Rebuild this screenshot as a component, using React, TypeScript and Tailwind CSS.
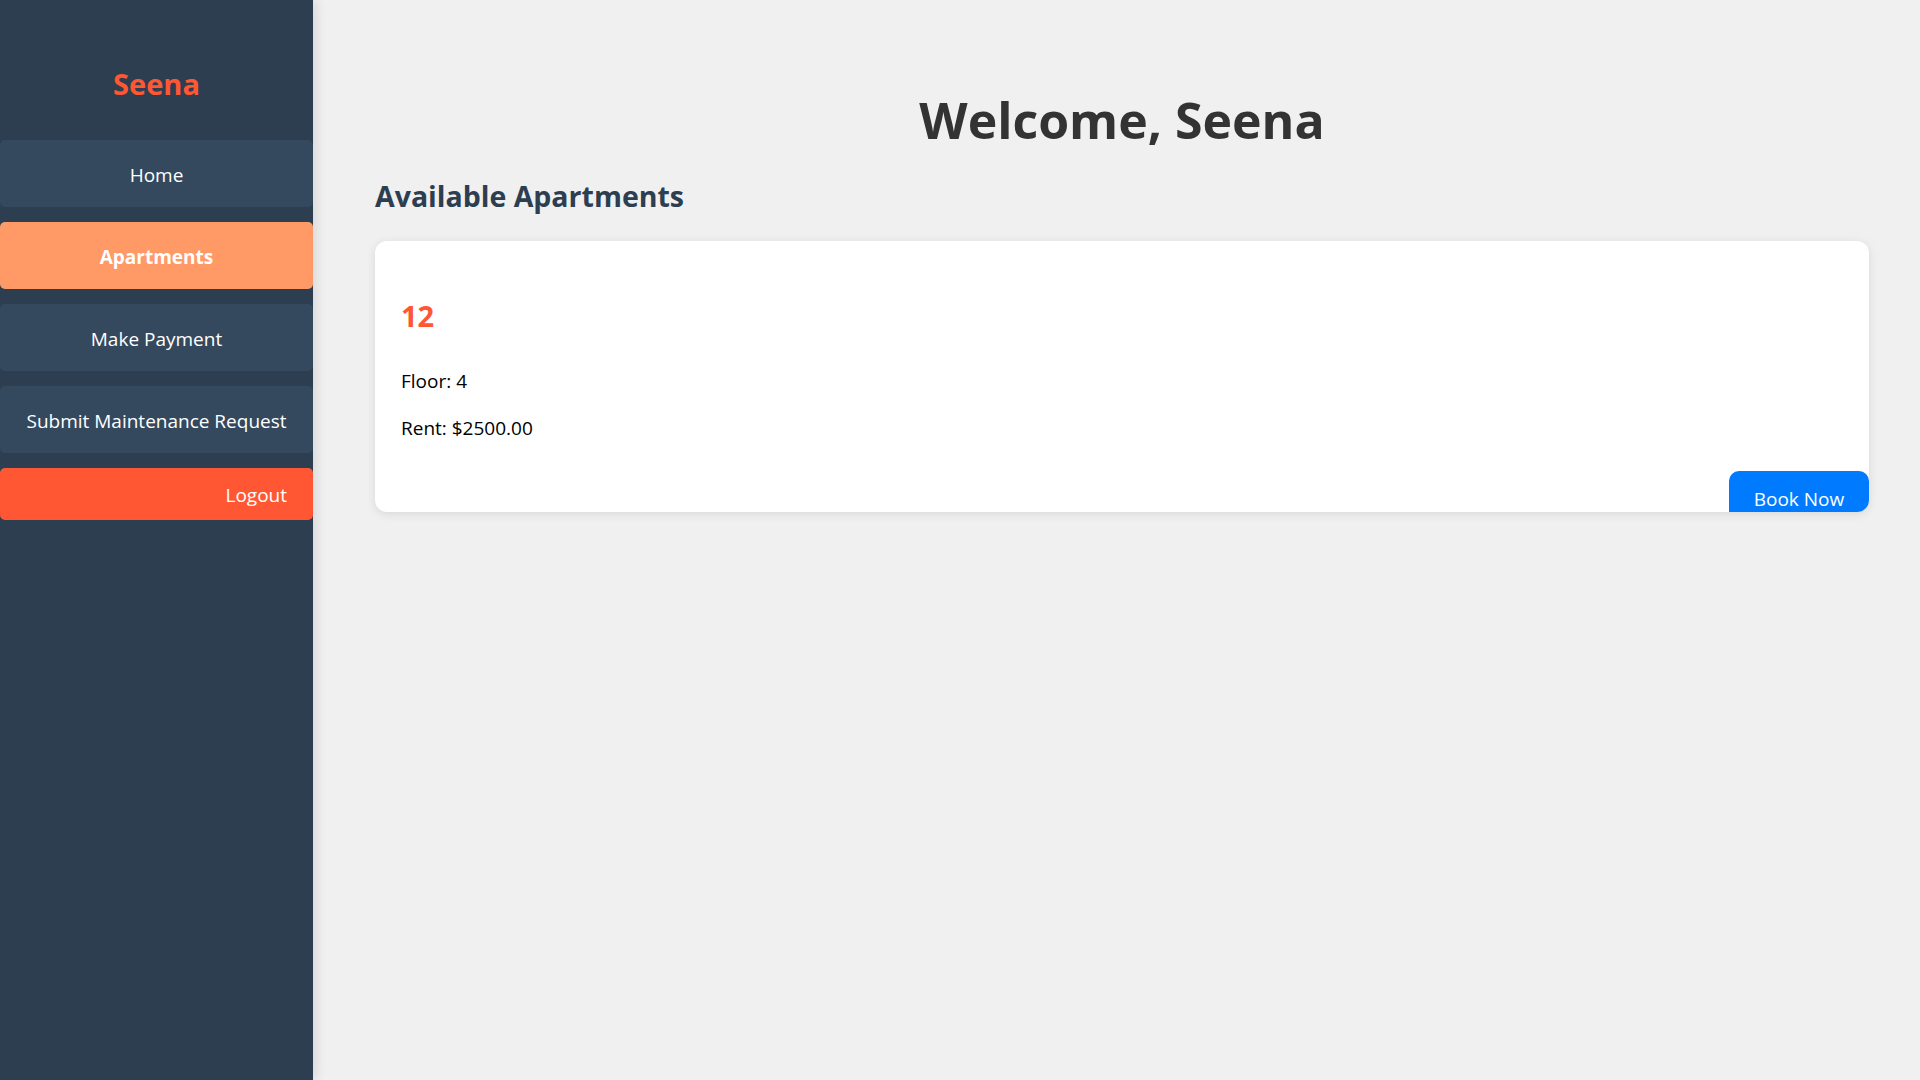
const NAV = [
  { label: 'Home', active: false },
  { label: 'Apartments', active: true },
  { label: 'Make Payment', active: false },
  { label: 'Submit Maintenance Request', active: false },
];

export default function App() {
  return (
    <div className="flex min-h-screen bg-[#f0f0f0] font-['Open_Sans',sans-serif]">
      {/* Sidebar */}
      <aside className="w-[313px] shrink-0 bg-[#2c3e50] shadow-[2px_0_12px_rgba(0,0,0,0.12)] z-10">
        <div className="pt-[66px] text-center text-[29px] leading-[36px] font-bold text-[#ff5733]">Seena</div>
        <nav className="mt-[38px] flex flex-col gap-[15px]">
          {NAV.map(item => (
            <div
              key={item.label}
              className={
                item.active
                  ? 'h-[67px] pt-[3px] flex items-center justify-center rounded-[5px] bg-[#ff9966] text-white text-[19px] font-bold'
                  : 'h-[67px] pt-[3px] flex items-center justify-center rounded-[5px] bg-[#34495e] text-white text-[19px]'
              }
            >
              {item.label}
            </div>
          ))}
          <div className="h-[52px] pt-[2px] flex items-center justify-end pr-[26px] rounded-[5px] bg-[#ff5733] text-white text-[19px]">
            Logout
          </div>
        </nav>
      </aside>

      {/* Main */}
      <main className="flex-1 pl-[62px] pr-[51px] pt-[90px]">
        <h1 className="text-center text-[50px] leading-[60px] font-bold text-[#333333]">Welcome, Seena</h1>
        <h2 className="mt-[28px] text-[28.5px] leading-[36px] font-bold text-[#2c3e50]">Available Apartments</h2>

        <div className="mt-[27px] h-[271px] overflow-hidden rounded-[12px] bg-white shadow-[0_2px_10px_rgba(0,0,0,0.1)] flex flex-col">
          <div className="pl-[26px] pt-[57px]">
            <h3 className="text-[29px] leading-[36px] font-bold text-[#ff5733]">12</h3>
            <p className="mt-[34px] text-[19px] leading-[27px] text-black">Floor: 4</p>
            <p className="mt-[20px] text-[19px] leading-[27px] text-black">Rent: $2500.00</p>
          </div>
          <button className="mt-[29px] self-end w-[140px] pt-[15px] pb-[14px] rounded-[10px] bg-[#007bff] text-white text-[19px] leading-[27px]">
            Book Now
          </button>
        </div>
      </main>
    </div>
  );
}
